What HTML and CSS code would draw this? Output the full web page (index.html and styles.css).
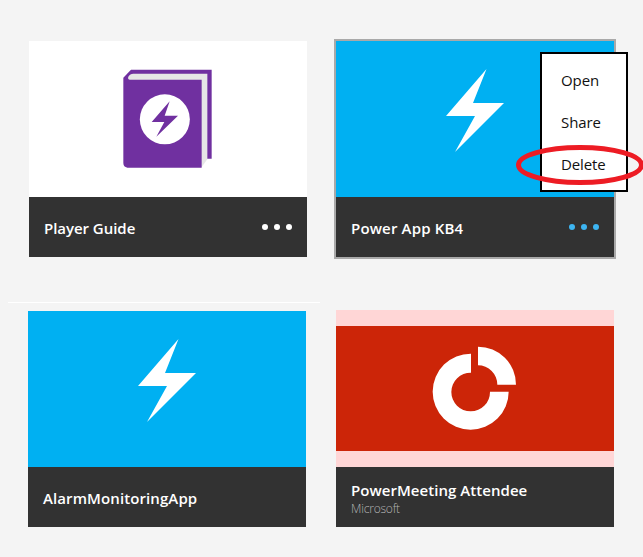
FILE: index.html
```html
<!DOCTYPE html>
<html lang="en">
<head>
<meta charset="utf-8">
<title>Apps</title>
<link rel="stylesheet" href="styles.css">
</head>
<body>
<main class="apps">
  <section class="column">
    <article class="card">
      <div class="cover cover-guide">
        <svg class="book" viewBox="0 0 345 375">
          <path fill="#e6e6e6" d="M52 54H293V311L275 336H52Z"/>
          <path fill="#7030a0" d="M63 44H305V311H292V56H70Q60 56 55 65Q52 73 60 74H275V338H52Q40 336 40 324V68Z"/>
          <circle cx="164.500" cy="193" r="75" fill="#fff"/>
          <path fill="#7030a0" d="M179 139L125 201H163L139 245L204 182H164Z"/>
        </svg>
      </div>
      <footer class="bar"><h2 class="name guide-name">Player Guide</h2><span class="dots"><i></i><i></i><i></i></span></footer>
    </article>
    <hr class="rule">
    <article class="card">
      <div class="cover cover-blue">
        <svg class="bolt" viewBox="0 0 58 83"><path d="M40.500 0L0 47H29L9 83L58 34H27Z"/></svg>
      </div>
      <footer class="bar"><h2 class="name alarm-name">AlarmMonitoringApp</h2></footer>
    </article>
  </section>
  <section class="column">
    <article class="card selected">
      <div class="cover cover-blue">
        <svg class="bolt" viewBox="0 0 58 83"><path d="M40.500 0L0 47H29L9 83L58 34H27Z"/></svg>
      </div>
      <footer class="bar"><h2 class="name power-name">Power App KB4</h2><span class="dots active"><i></i><i></i><i></i></span></footer>
      <ul class="menu"><li>Open</li><li>Share</li><li>Delete</li></ul>
      <svg class="highlight" viewBox="0 0 130 42"><ellipse cx="65" cy="21" rx="61.500" ry="17.500"/></svg>
    </article>
    <article class="card">
      <div class="cover cover-red">
        <svg class="ring" viewBox="0 0 330 330"><path d="M153 56V113A58 58 0 1 0 210 170H266A114 114 0 1 1 153 56ZM174 35A114 114 0 0 1 288 149H232A58 58 0 0 0 174 91Z"/></svg>
      </div>
      <footer class="bar"><div class="details"><h2 class="name meeting-name">PowerMeeting Attendee</h2><p class="publisher">Microsoft</p></div></footer>
    </article>
  </section>
</main>
</body>
</html>
```
FILE: styles.css
```css
* { box-sizing: border-box; }
body {
  margin: 0;
  height: 557px;
  overflow: hidden;
  background: #f4f4f4;
  font-family: "Open Sans", "Noto Sans", sans-serif;
}
.apps {
  display: flex;
  gap: 14px;
  padding: 39px 0 0 8px;
}
.column { display: flex; flex-direction: column; }
.column:first-child { width: 312px; padding-top: 2px; }
.column:first-child .card { margin-left: 20px; }
.column:first-child .card:first-child { margin-left: 21px; }
.column:last-child { gap: 51px; }
.card { width: 278px; }
.column:last-child .card:last-child { margin-left: 2px; }
.selected {
  position: relative;
  width: 282px;
  border: 2px solid #a9a9a9;
}
.rule {
  width: 312px;
  height: 1px;
  margin: 45px 0 8px;
  border: 0;
  background: #fff;
}
.cover { display: flex; justify-content: center; height: 156px; }
.cover-guide { padding: 14px 1px 0 0; background: #fff; }
.cover-blue { padding-top: 28px; background: #00b0f2; }
.cover-red {
  align-items: center;
  height: 157px;
  padding-top: 2px;
  border: solid #ffd6d6;
  border-width: 16px 0;
  background: #cc2508;
}
.book { width: 115px; height: 125px; }
.bolt { width: 58px; height: 83px; fill: #fff; }
.ring { flex: none; width: 110px; height: 110px; fill: #fff; }
.bar {
  display: flex;
  align-items: center;
  justify-content: space-between;
  height: 60px;
  padding: 1px 15px 0;
  background: #323232;
}
.name {
  margin: 0;
  color: #fff;
  font-size: 15px;
  font-weight: 600;
  line-height: 20px;
  white-space: nowrap;
}
.guide-name { letter-spacing: -0.04px; }
.power-name { letter-spacing: 0.16px; }
.alarm-name { letter-spacing: 0.1px; }
.details { padding-top: 1px; }
.meeting-name { letter-spacing: 0.05px; }
.publisher {
  margin: 0;
  color: #b4b4b4;
  font-size: 12px;
  font-weight: 300;
  letter-spacing: -0.2px;
  line-height: 17px;
}
.dots { display: flex; gap: 6px; margin-top: -1px; color: #fff; }
.dots i { width: 6px; height: 6px; border-radius: 50%; background: currentColor; }
.active { color: #3db5f2; }
.menu {
  position: absolute;
  top: 11px;
  left: 204px;
  width: 88px;
  height: 140px;
  margin: 0;
  padding: 5px 0 0 19px;
  border: 2px solid #000;
  background: #fff;
  color: #111;
  font-size: 15px;
  letter-spacing: -0.1px;
  line-height: 42px;
  list-style: none;
}
.highlight {
  position: absolute;
  top: 103px;
  left: 179px;
  width: 130px;
  height: 42px;
  fill: none;
  stroke: #ed1c24;
  stroke-width: 5px;
}
```
